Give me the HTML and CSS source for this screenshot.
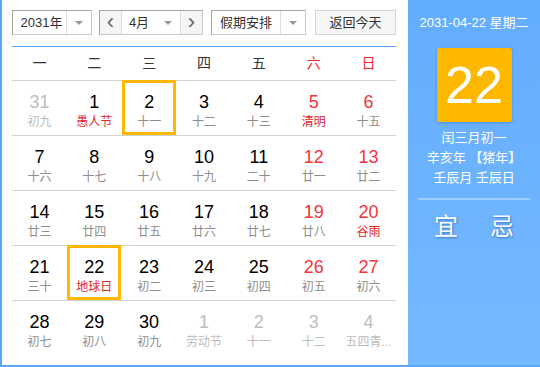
FILE: index.html
```html
<!doctype html>
<html>
<head>
<meta charset="utf-8">
<title>万年历</title>
<link rel="stylesheet" href="styles.css">
</head>
<body>
<div class="cal">
    <div class="main">
        <div class="controls">
            <div class="sel year">
                <span class="sel-text">2031年</span>
                <span class="sel-arrow"></span>
            </div>
            <div class="sel month">
                <span class="nav">&lsaquo;</span>
                <span class="sel-text">4月</span>
                <span class="sel-arrow"></span>
                <span class="nav">&rsaquo;</span>
            </div>
            <div class="sel holiday">
                <span class="sel-text">假期安排</span>
                <span class="sel-arrow"></span>
            </div>
            <div class="today">返回今天</div>
        </div>
        <div class="week">
            <span>一</span><span>二</span><span>三</span><span>四</span><span>五</span>
            <span class="red">六</span><span class="red">日</span>
        </div>
        <div class="days">
            <div class="row">
                <div class="day other"><b>31</b><i>初九</i></div>
                <div class="day"><b>1</b><i class="fest">愚人节</i></div>
                <div class="day picked"><b>2</b><i>十一</i></div>
                <div class="day"><b>3</b><i>十二</i></div>
                <div class="day"><b>4</b><i>十三</i></div>
                <div class="day wkend"><b>5</b><i class="fest">清明</i></div>
                <div class="day wkend"><b>6</b><i>十五</i></div>
            </div>
            <div class="row">
                <div class="day"><b>7</b><i>十六</i></div>
                <div class="day"><b>8</b><i>十七</i></div>
                <div class="day"><b>9</b><i>十八</i></div>
                <div class="day"><b>10</b><i>十九</i></div>
                <div class="day"><b>11</b><i>二十</i></div>
                <div class="day wkend"><b>12</b><i>廿一</i></div>
                <div class="day wkend"><b>13</b><i>廿二</i></div>
            </div>
            <div class="row">
                <div class="day"><b>14</b><i>廿三</i></div>
                <div class="day"><b>15</b><i>廿四</i></div>
                <div class="day"><b>16</b><i>廿五</i></div>
                <div class="day"><b>17</b><i>廿六</i></div>
                <div class="day"><b>18</b><i>廿七</i></div>
                <div class="day wkend"><b>19</b><i>廿八</i></div>
                <div class="day wkend"><b>20</b><i class="fest">谷雨</i></div>
            </div>
            <div class="row">
                <div class="day"><b>21</b><i>三十</i></div>
                <div class="day picked"><b>22</b><i class="fest">地球日</i></div>
                <div class="day"><b>23</b><i>初二</i></div>
                <div class="day"><b>24</b><i>初三</i></div>
                <div class="day"><b>25</b><i>初四</i></div>
                <div class="day wkend"><b>26</b><i>初五</i></div>
                <div class="day wkend"><b>27</b><i>初六</i></div>
            </div>
            <div class="row">
                <div class="day"><b>28</b><i>初七</i></div>
                <div class="day"><b>29</b><i>初八</i></div>
                <div class="day"><b>30</b><i>初九</i></div>
                <div class="day other"><b>1</b><i>劳动节</i></div>
                <div class="day other"><b>2</b><i>十一</i></div>
                <div class="day other"><b>3</b><i>十二</i></div>
                <div class="day other"><b>4</b><i>五四青...</i></div>
            </div>
        </div>
    </div>
    <div class="side">
        <p class="side-date">2031-04-22 星期二</p>
        <div class="side-day">22</div>
        <p class="lunar">闰三月初一</p>
        <p class="lunar">辛亥年 【猪年】</p>
        <p class="lunar">壬辰月 壬辰日</p>
        <div class="side-line"></div>
        <div class="yiji"><span>宜</span><span>忌</span></div>
    </div>
</div>
</body>
</html>
```

FILE: styles.css
```css
html, body {
    margin: 0;
    padding: 0;
    background: #fff;
    font-family: "Liberation Sans", "Noto Sans CJK SC", sans-serif;
}
p {
    margin: 0;
}
.cal {
    display: flex;
    width: 538px;
    height: 365px;
    border-left: 2px solid #5aa8fb;
    border-bottom: 2px solid #5aa8fb;
}
.main {
    width: 384px;
    padding: 10px 12px 0 10px;
}

/* top controls */
.controls {
    display: flex;
    height: 25px;
}
.sel {
    display: flex;
    align-items: center;
    box-sizing: border-box;
    height: 25px;
    border: 1px solid #c8c8c8;
    border-top-color: #a6a6a6;
    border-left-color: #a6a6a6;
    font-size: 13px;
    color: #333;
}
.sel-text {
    flex: 1;
    text-align: center;
    line-height: 23px;
    border-right: 1px solid #ddd;
}
.sel-arrow {
    width: 24px;
    height: 23px;
    position: relative;
}
.sel-arrow::after {
    content: "";
    position: absolute;
    left: 8px;
    top: 10px;
    border: 4px solid transparent;
    border-top: 4px solid #999;
}
.year {
    width: 80px;
}
.year .sel-text {
    padding-left: 4px;
}
.month {
    width: 104px;
    margin-left: 7px;
}
.month .sel-arrow {
    border-right: 1px solid #ddd;
}
.month .sel-text {
    border-right: none;
}
.nav {
    width: 21px;
    height: 23px;
    line-height: 21px;
    text-align: center;
    background: #f5f5f5;
    color: #666;
    font-size: 22px;
}
.nav:first-child {
    border-right: 1px solid #ddd;
}
.holiday {
    width: 95px;
    margin-left: 8px;
}
.today {
    width: 81px;
    height: 25px;
    box-sizing: border-box;
    margin-left: 9px;
    border: 1px solid #d4d4d4;
    background: #f6f6f6;
    font-size: 13px;
    line-height: 23px;
    text-align: center;
    color: #333;
}

/* week header */
.week {
    display: grid;
    grid-template-columns: repeat(7, 1fr);
    margin-top: 11px;
    border-top: 1px solid #57a5f9;
    height: 33px;
    line-height: 33px;
    font-size: 14px;
    color: #333;
    text-align: center;
}
.red {
    color: #ee2a2a;
}

/* day grid */
.row {
    display: grid;
    grid-template-columns: repeat(7, 1fr);
    border-top: 1px solid #d2d2d2;
    height: 54px;
}
.day {
    position: relative;
    text-align: center;
    padding-top: 10px;
}
.day b {
    display: block;
    font-weight: normal;
    font-size: 18px;
    line-height: 22px;
    color: #000;
}
.day i {
    display: block;
    font-style: normal;
    font-size: 12px;
    line-height: 18px;
    color: #8e8e8e;
    white-space: nowrap;
}
.day i.fest {
    color: #e32626;
}
.wkend b {
    color: #f0353d;
}
.other b,
.other i {
    color: #bdbdbd;
}
.picked::after {
    content: "";
    position: absolute;
    top: -1px;
    left: 0;
    right: 1px;
    bottom: 0;
    border: 3px solid #ffb900;
}

/* right panel */
.side {
    width: 132px;
    background: linear-gradient(#63adff, #75b9ff);
    color: #fff;
    text-align: center;
    padding-top: 13px;
}
.side-date {
    font-size: 13px;
    line-height: 20px;
}
.side-day {
    width: 75px;
    height: 74px;
    margin: 15px auto 6px;
    background: #ffb800;
    border-radius: 3px;
    box-shadow: 0 1px 3px rgba(0, 60, 140, 0.3);
    font-size: 52px;
    line-height: 74px;
}
.lunar {
    font-size: 13px;
    line-height: 20px;
}
.side-line {
    height: 2px;
    margin: 10px 10px 0 10px;
    background: rgba(255, 255, 255, 0.35);
}
.yiji {
    margin-top: 12px;
    font-size: 24px;
    line-height: 30px;
    text-shadow: 1px 1px 2px rgba(20, 60, 140, 0.5);
}
.yiji span {
    display: inline-block;
    width: 24px;
    margin: 0 16px;
}
```
